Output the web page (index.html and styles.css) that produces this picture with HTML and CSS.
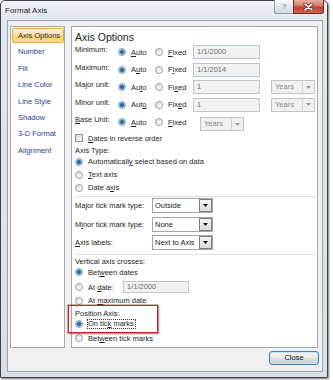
FILE: index.html
```html
<!DOCTYPE html>
<html>
<head>
<meta charset="utf-8">
<title>Format Axis</title>
<link rel="stylesheet" href="styles.css">
</head>
<body>
<div class="win">
  <div class="titlebar">
    <span class="title">Format Axis</span>
    <div class="caption-btns">
      <span class="btn-help">?</span>
      <span class="btn-close"><svg width="11" height="8" viewBox="0 0 11 8"><path d="M2 1.2 L9 6.8 M9 1.2 L2 6.8" stroke="#6a2a22" stroke-width="3.2" stroke-linecap="round"/><path d="M2 1.2 L9 6.8 M9 1.2 L2 6.8" stroke="#ffffff" stroke-width="1.6" stroke-linecap="round"/></svg></span>
    </div>
  </div>
  <div class="client">
    <div class="panes">
      <ul class="side">
        <li class="sel">Axis Options</li>
        <li>Number</li>
        <li>Fill</li>
        <li>Line Color</li>
        <li>Line Style</li>
        <li>Shadow</li>
        <li>3-D Format</li>
        <li>Alignment</li>
      </ul>
      <div class="main">
        <div class="heading">Axis Options</div>
        <div class="grid">
          <span class="lbl">Minimum:</span>
          <span class="opt"><span class="rb on"></span><span><u>A</u>uto</span></span>
          <span class="opt"><span class="rb"></span><span><u>F</u>ixed</span></span>
          <span class="tb blue">1/1/2000</span>
          <span></span>

          <span class="lbl">Maximum:</span>
          <span class="opt"><span class="rb on"></span><span>A<u>u</u>to</span></span>
          <span class="opt"><span class="rb"></span><span>F<u>i</u>xed</span></span>
          <span class="tb blue">1/1/2014</span>
          <span></span>

          <span class="lbl">Major unit:</span>
          <span class="opt"><span class="rb on"></span><span>Au<u>t</u>o</span></span>
          <span class="opt"><span class="rb"></span><span>Fi<u>x</u>ed</span></span>
          <span class="tb grey">1</span>
          <span class="dd"><span class="dd-txt">Years</span><span class="dd-btn"><svg width="5" height="3" viewBox="0 0 5 3"><path d="M0 0 H5 L2.5 3 Z" fill="#9a9a9a"/></svg></span></span>

          <span class="lbl">Minor unit:</span>
          <span class="opt"><span class="rb on"></span><span>Aut<u>o</u></span></span>
          <span class="opt"><span class="rb"></span><span>Fix<u>e</u>d</span></span>
          <span class="tb grey">1</span>
          <span class="dd"><span class="dd-txt">Years</span><span class="dd-btn"><svg width="5" height="3" viewBox="0 0 5 3"><path d="M0 0 H5 L2.5 3 Z" fill="#9a9a9a"/></svg></span></span>

          <span class="lbl"><u>B</u>ase Unit:</span>
          <span class="opt"><span class="rb on"></span><span><u>A</u>uto</span></span>
          <span class="opt"><span class="rb"></span><span><u>F</u>ixed</span></span>
          <span class="dd base"><span class="dd-txt">Years</span><span class="dd-btn"><svg width="5" height="3" viewBox="0 0 5 3"><path d="M0 0 H5 L2.5 3 Z" fill="#9a9a9a"/></svg></span></span>
          <span></span>
        </div>

        <div class="row check-row"><span class="cb"></span><span><u>D</u>ates in reverse order</span></div>
        <div class="row axtype">Axis Type:</div>
        <div class="row r13"><span class="rb on"></span><span>Automaticall<u>y</u> select based on data</span></div>
        <div class="row r13"><span class="rb"></span><span><u>T</u>ext axis</span></div>
        <div class="row r13"><span class="rb"></span><span>Date a<u>x</u>is</span></div>
        <div class="sep s1"></div>

        <div class="row selrow first"><span class="slbl">Ma<u>j</u>or tick mark type:</span><span class="sel-box"><span class="sel-txt">Outside</span><span class="sel-btn"><svg width="5" height="3" viewBox="0 0 5 3"><path d="M0 0 H5 L2.5 3 Z" fill="#111"/></svg></span></span></div>
        <div class="row selrow"><span class="slbl">M<u>i</u>nor tick mark type:</span><span class="sel-box"><span class="sel-txt">None</span><span class="sel-btn"><svg width="5" height="3" viewBox="0 0 5 3"><path d="M0 0 H5 L2.5 3 Z" fill="#111"/></svg></span></span></div>
        <div class="row selrow"><span class="slbl"><u>A</u>xis labels:</span><span class="sel-box"><span class="sel-txt">Next to Axis</span><span class="sel-btn"><svg width="5" height="3" viewBox="0 0 5 3"><path d="M0 0 H5 L2.5 3 Z" fill="#111"/></svg></span></span></div>
        <div class="sep s2"></div>

        <div class="row vac">Vertical axis crosses:</div>
        <div class="row btwd"><span class="rb on"></span><span>Bet<u>w</u>een dates</span></div>
        <div class="row atdate"><span class="rb"></span><span class="atlbl">At <u>d</u>ate:</span><span class="tb blue small">1/1/2000</span></div>
        <div class="row atmax"><span class="rb"></span><span>At <u>m</u>aximum date</span></div>
        <div class="row posaxis">Position Axis:</div>
        <div class="row ontick"><span class="rb on"></span><span class="focus">On tic<u>k</u> marks</span></div>
        <div class="row btwt"><span class="rb"></span><span>Bet<u>w</u>een tick marks</span></div>
      </div>
    </div>
    <div class="foot"><button class="close">Close</button></div>
  </div>
  <div class="annot"></div>
</div>
</body>
</html>
```

FILE: styles.css
```css
* { box-sizing: border-box; margin: 0; padding: 0; }
body {
  margin: 0;
  background: #ffffff;
  font-family: "Liberation Sans", Arial, sans-serif;
  font-size: 7.5px;
  color: #1e1e1e;
  width: 333px;
  height: 380px;
  overflow: hidden;
}
u { text-decoration: underline; text-underline-offset: 1px; }

.win {
  position: relative;
  width: 328px;
  height: 378px;
  border: 1px solid #3d4045;
  border-radius: 5px 5px 1px 1px;
  background: linear-gradient(#f0f3f7 0, #e1e7ee 20px, #d8dfe7 100%);
  box-shadow: 1px 1px 2px rgba(0,0,0,.55);
  padding: 0 4px 5px 6px;
}

.titlebar {
  display: flex;
  justify-content: space-between;
  align-items: flex-start;
  height: 19px;
  margin: 0 -4px 0 -6px;
  padding: 0 3px 0 4px;
}
.title { font-size: 8px; line-height: 19px; color: #1b1b1b; }
.caption-btns { display: flex; margin-top: -1px; }
.btn-help {
  width: 19px;
  height: 14px;
  border: 1px solid #8e99a5;
  border-top: none;
  border-right: none;
  border-radius: 0 0 0 3px;
  background: linear-gradient(#f7f9fb, #e2e8ef 50%, #d3dbe4);
  font-size: 8px;
  line-height: 13px;
  text-align: center;
  color: #6f7984;
}
.btn-close {
  width: 31px;
  height: 14px;
  border: 1px solid #6e2b24;
  border-top: none;
  border-radius: 0 0 3px 0;
  background: linear-gradient(#eab0a6, #d5766a 45%, #c2402f 55%, #d3654f);
  display: flex;
  align-items: center;
  justify-content: center;
}

.client {
  height: 352px;
  border: 1px solid #97a3b0;
  background: #f0f0f0;
  padding: 5px 0 0 2px;
}
.panes { display: flex; gap: 6px; height: 322px; }

.side {
  width: 55px;
  border: 1px solid #a3a8ae;
  background: #ffffff;
  list-style: none;
  padding: 1px 0 0 1px;
}
.side li {
  height: 15px;
  line-height: 13px;
  padding-left: 5px;
  border: 1px solid transparent;
  margin-bottom: 1.4px;
  color: #1f3f8c;
  white-space: nowrap;
}
.side li.sel {
  border-color: #e5a549;
  border-radius: 2px;
  background: linear-gradient(#fff4d4, #fde3a0 45%, #fbcf6c 55%, #fcdc8c);
  color: #1d2f55;
}

.main {
  width: 247px;
  border: 1px solid #a3a8ae;
  background: #ffffff;
  padding: 2px 0 0 3px;
}
.heading { font-size: 10.5px; line-height: 16px; height: 16px; color: #1d1d1d; }

.grid {
  display: grid;
  grid-template-columns: 43px 37px 38px 78px 44px;
  grid-auto-rows: 14px;
  row-gap: 3.5px;
}
.lbl { align-self: start; line-height: 10px; white-space: nowrap; }
.opt { display: flex; align-items: center; gap: 5px; }

.rb {
  flex: none;
  width: 8px;
  height: 8px;
  border-radius: 50%;
  border: 1px solid #9c9c9c;
  background: linear-gradient(135deg, #d6d6d6, #f7f7f7 70%, #ffffff);
}
.rb.on {
  border-color: #8aa0b6;
  background: radial-gradient(circle at 50% 50%, #1a5ea6 0, #2c6fb4 1.6px, #9ec1e0 2.6px, #e4ecf4 3.2px);
}
.cb {
  flex: none;
  width: 8px;
  height: 8px;
  border: 1px solid #8f8f8f;
  background: linear-gradient(135deg, #dadada, #f6f6f6);
}

.tb {
  width: 67px;
  height: 14px;
  border: 1px solid #b4c7dc;
  background: #f2f2f2;
  color: #6e6e6e;
  padding-left: 3px;
  line-height: 12px;
}
.tb.grey { border-color: #c6c6c6; }
.tb.small { width: 66px; height: 12px; line-height: 10px; }

.dd {
  display: flex;
  width: 44px;
  height: 14px;
  border: 1px solid #c4c4c4;
  background: #f0f0f0;
  color: #8c8c8c;
}
.dd.base { margin: 2px 0 0 7px; }
.dd-txt { flex: 1; padding-left: 3px; line-height: 12px; }
.dd-btn {
  width: 12px;
  border-left: 1px solid #cfcfcf;
  display: flex;
  align-items: center;
  justify-content: center;
}

.row { display: flex; align-items: center; white-space: nowrap; }
.row > .rb, .row > .cb { margin-right: 5px; }
.check-row { height: 14px; margin-top: 2px; }
.axtype { height: 10px; }
.r13 { height: 13px; }
.sep { width: 241px; height: 1px; background: #dbe0e5; }
.s1 { margin-top: 2px; }
.s2 { margin-top: 3.5px; }

.selrow { height: 15px; margin-top: 3.5px; }
.selrow.first { margin-top: 1px; }
.slbl { width: 77px; }
.sel-box {
  display: flex;
  width: 61px;
  height: 15px;
  border: 1px solid #a5a5a5;
  background: #ffffff;
  color: #1e1e1e;
}
.sel-txt { flex: 1; padding-left: 2px; line-height: 13px; overflow: hidden; }
.sel-btn {
  width: 13px;
  height: 13px;
  border: 1px solid #7d7d7d;
  background: linear-gradient(#f4f4f4, #dcdcdc);
  display: flex;
  align-items: center;
  justify-content: center;
}

.vac { height: 12px; margin-top: 0.5px; }
.btwd { height: 10px; }
.atdate { height: 14px; margin-top: 3px; }
.atlbl { width: 35px; }
.atmax { height: 11px; margin-top: 1px; }
.posaxis { height: 10px; margin-top: 2px; }
.ontick { height: 12px; }
.ontick > .rb { margin-right: 4px; }
.focus { border: 1px dotted #3a3a3a; line-height: 8px; padding-right: 1px; }
.btwt { height: 12px; margin-top: 2px; }

.foot { display: flex; justify-content: flex-end; padding: 3px 3px 0 0; }
.close {
  width: 50px;
  height: 14px;
  border: 1px solid #3c7fb1;
  border-radius: 3px;
  background: linear-gradient(#f3f3f3, #ebebeb 45%, #dddddd 55%, #d0d0d0);
  box-shadow: inset 0 0 0 1px #c6e6f8;
  font-family: "Liberation Sans", Arial, sans-serif;
  font-size: 7.5px;
  color: #111;
  line-height: 12px;
}

.annot {
  position: absolute;
  left: 67px;
  top: 304px;
  width: 90px;
  height: 28px;
  border: 1px solid #c4232b;
  box-shadow: 0 0 0 0.6px rgba(196,35,43,.6), 1px 1px 2px rgba(0,0,0,.35);
  pointer-events: none;
}
```
